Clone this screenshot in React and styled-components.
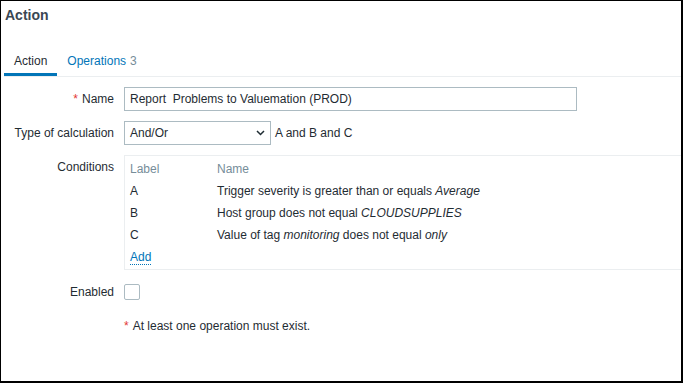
import React from "react";
import styled, { createGlobalStyle } from "styled-components";

const GlobalStyle = createGlobalStyle`
  body {
    margin: 0;
    font-family: "Liberation Sans", Arial, sans-serif;
    font-size: 12px;
    color: #1f2c33;
  }
`;

const Window = styled.div`
  width: 683px;
  height: 383px;
  box-sizing: border-box;
  border: 1px solid #000;
  border-right-width: 2px;
  border-bottom-width: 2px;
  background: #fff;
  overflow: hidden;
`;

const Header = styled.header`
  padding: 5px 4px 0;
  margin-bottom: 25px;
`;

const Title = styled.h1`
  margin: 0;
  font-size: 14px;
  line-height: 18px;
  font-weight: bold;
  color: #3a4753;
`;

const TabNav = styled.nav`
  display: flex;
  margin-left: 3px;
  border-bottom: 1px solid #ebeef0;
`;

const Tab = styled.div`
  padding: 0 10px;
  line-height: 24px;
  border-bottom: 3px solid ${(p) => (p.$active ? "#0275b8" : "transparent")};
  color: ${(p) => (p.$active ? "#1f2c33" : "#0275b8")};
`;

const Count = styled.span`
  color: #768d99;
  margin-left: 4px;
`;

const Form = styled.div`
  display: flex;
  flex-direction: column;
  gap: 10px;
  padding-top: 10px;
`;

const Row = styled.div`
  display: grid;
  grid-template-columns: 113px 1fr;
  column-gap: 10px;
  align-items: start;
`;

const Label = styled.div`
  text-align: right;
  line-height: 24px;
  white-space: nowrap;
`;

const Req = styled.span`
  color: #e33734;
  margin-right: 4px;
`;

const TextInput = styled.div`
  width: 453px;
  height: 24px;
  box-sizing: border-box;
  border: 1px solid #acbbc2;
  padding: 0 5px;
  line-height: 22px;
`;

const Inline = styled.div`
  display: flex;
  align-items: center;
  gap: 4px;
  line-height: 24px;
`;

const Select = styled.div`
  width: 147px;
  height: 24px;
  box-sizing: border-box;
  border: 1px solid #acbbc2;
  padding: 0 5px;
  display: flex;
  align-items: center;
  justify-content: space-between;
`;

const Table = styled.div`
  border: 1px solid #ebeef0;
  border-right: none;
  padding: 2px 5px 1px;
  display: grid;
  grid-template-columns: 87px 1fr;
  line-height: 22px;
`;

const HeadCell = styled.div`
  color: #768d99;
`;

const Link = styled.span`
  color: #0275b8;
  border-bottom: 1px dotted #0275b8;
`;

const Checkbox = styled.div`
  width: 16px;
  height: 16px;
  box-sizing: border-box;
  border: 1px solid #acbbc2;
  border-radius: 2px;
  margin-top: 4px;
`;

const Message = styled.div`
  line-height: 24px;
`;

const Chevron = () => (
  <svg width="9" height="6" viewBox="0 0 9 6">
    <path d="M1 1l3.5 3.5L8 1" fill="none" stroke="#1f2c33" strokeWidth="1.5" />
  </svg>
);

const conditions = [
  ["A", <>Trigger severity is greater than or equals <i>Average</i></>],
  ["B", <>Host group does not equal <i>CLOUDSUPPLIES</i></>],
  ["C", <>Value of tag <i>monitoring</i> does not equal <i>only</i></>],
];

export default function App() {
  return (
    <>
      <GlobalStyle />
      <Window>
        <Header>
          <Title>Action</Title>
        </Header>
        <TabNav>
          <Tab $active>Action</Tab>
          <Tab>
            Operations<Count>3</Count>
          </Tab>
        </TabNav>
        <Form>
          <Row>
            <Label>
              <Req>*</Req>Name
            </Label>
            <TextInput>Report&nbsp; Problems to Valuemation (PROD)</TextInput>
          </Row>
          <Row>
            <Label>Type of calculation</Label>
            <Inline>
              <Select>
                And/Or
                <Chevron />
              </Select>
              A and B and C
            </Inline>
          </Row>
          <Row>
            <Label>Conditions</Label>
            <Table>
              <HeadCell>Label</HeadCell>
              <HeadCell>Name</HeadCell>
              {conditions.map(([l, n]) => (
                <React.Fragment key={l}>
                  <div>{l}</div>
                  <div>{n}</div>
                </React.Fragment>
              ))}
              <div>
                <Link>Add</Link>
              </div>
            </Table>
          </Row>
          <Row>
            <Label>Enabled</Label>
            <Checkbox />
          </Row>
          <Row>
            <div />
            <Message>
              <Req>*</Req>At least one operation must exist.
            </Message>
          </Row>
        </Form>
      </Window>
    </>
  );
}
